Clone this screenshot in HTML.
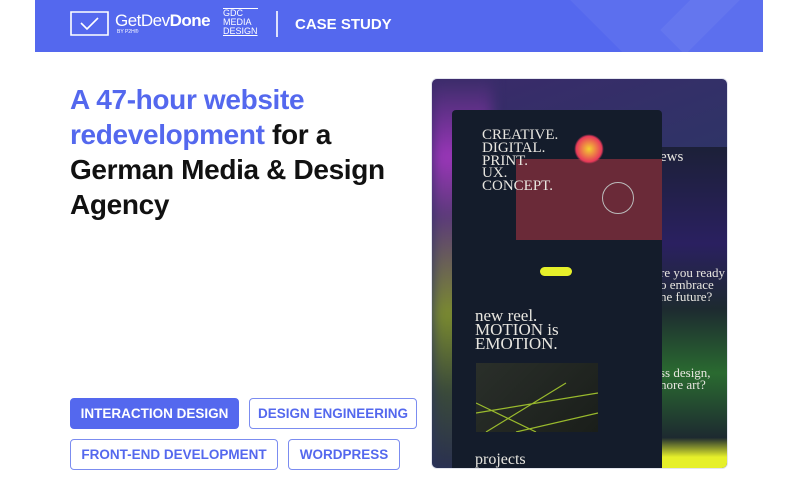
<!DOCTYPE html>
<html><head><meta charset="utf-8"><style>
*{margin:0;padding:0;box-sizing:border-box}
body{width:800px;height:480px;background:#fff;font-family:"Liberation Sans",sans-serif;position:relative;overflow:hidden}
.hdr{position:absolute;left:35px;top:0;width:728px;height:52px;background:#5468ee;overflow:hidden}
.hdr .sh{position:absolute;background:rgba(255,255,255,.05);transform:rotate(45deg)}
h1{position:absolute;left:70px;top:82px;font-size:28px;line-height:35px;font-weight:700;color:#111;letter-spacing:-.35px;width:360px}
h1 span{color:#5468ee}
.tag{position:absolute;height:31px;border:1.5px solid #7b8cf0;border-radius:4px;color:#5468ee;font-weight:700;font-size:13.5px;display:flex;align-items:center;justify-content:center}
.tag.on{background:#5468ee;color:#fff;border-color:#5468ee}
.card{position:absolute;left:431px;top:78px;width:297px;height:391px;border-radius:6px;overflow:hidden;border:1px solid #e3e5ee;background:linear-gradient(160deg,#3a2a6a 0%,#2d3566 40%,#27305a 100%)}
.serif{font-family:"Liberation Serif",serif;color:#e8e6e0}
</style></head><body>
<div class="hdr">
<div class="sh" style="left:560px;top:-60px;width:120px;height:120px"></div>
<div class="sh" style="left:650px;top:-30px;width:120px;height:120px"></div>
<svg style="position:absolute;left:35px;top:11px" width="40" height="26"><path d="M1 1h37v23H1z M11 12l6 6 11-11" fill="none" stroke="#fff" stroke-width="1.6"/></svg>
<div style="position:absolute;left:80px;top:11px;color:#fff;font-size:17px;letter-spacing:-.5px">GetDev<b>Done</b></div>
<div style="position:absolute;left:82px;top:29px;color:#fff;font-size:5px">BY P2H®</div>
<div style="position:absolute;left:188px;top:8px;color:#fff;font-size:9px;line-height:9px;border-top:1px solid #fff">GDC<br>MEDIA<br><u>DESIGN</u></div>
<div style="position:absolute;left:241px;top:11px;width:2px;height:26px;background:#fff;opacity:.8"></div>
<div style="position:absolute;left:260px;top:16px;color:#fff;font-size:15px;font-weight:700">CASE STUDY</div>
</div>
<h1><span>A 47-hour website redevelopment</span> for a German Media &amp; Design Agency</h1>
<div class="tag on" style="left:70px;top:398px;width:169px">INTERACTION DESIGN</div>
<div class="tag" style="left:249px;top:398px;width:168px">DESIGN ENGINEERING</div>
<div class="tag" style="left:70px;top:439px;width:208px">FRONT-END DEVELOPMENT</div>
<div class="tag" style="left:288px;top:439px;width:112px">WORDPRESS</div>
<div class="card">
<div style="position:absolute;left:0;top:0;width:60px;height:391px;background:linear-gradient(180deg,#3b2d6a 0%,#9a36b8 20%,#5b3a7a 35%,#7a8a30 60%,#3a4a3a 80%,#2a3050 100%);filter:blur(6px)"></div>
<div style="position:absolute;left:228px;top:68px;width:70px;height:323px;background:linear-gradient(180deg,#1c2038 0%,#2a2060 30%,#1d2a30 50%,#2a6a30 70%,#1d2a30 90%,#e6f02a 96%)"></div>
<div style="position:absolute;left:228px;top:70px;font-size:15px" class="serif">ews</div>
<div style="position:absolute;left:228px;top:188px;font-size:13px;line-height:12px" class="serif">re you ready<br>o embrace<br>ne future?</div>
<div style="position:absolute;left:228px;top:288px;font-size:13px;line-height:12px" class="serif">ss design,<br>nore art?</div>
<div style="position:absolute;left:20px;top:31px;width:210px;height:360px;background:#141c2b;border-radius:4px 4px 0 0"></div>
<div style="position:absolute;left:84px;top:80px;width:146px;height:81px;background:#6a2a38"></div>
<div style="position:absolute;left:142px;top:55px;width:30px;height:30px;border-radius:50%;background:radial-gradient(circle,#f4d030,#e83a5a 60%,transparent 70%)"></div>
<div style="position:absolute;left:170px;top:103px;width:32px;height:32px;border-radius:50%;border:1px solid #bbb"></div>
<div style="position:absolute;left:50px;top:50px;font-size:15px;line-height:12.8px" class="serif">CREATIVE.<br>DIGITAL.<br>PRINT.<br>UX.<br>CONCEPT.</div>
<div style="position:absolute;left:108px;top:188px;width:32px;height:9px;border-radius:5px;background:#e6f02a"></div>
<div style="position:absolute;left:43px;top:230px;font-size:17px;line-height:14px" class="serif">new reel.<br>MOTION is<br>EMOTION.</div>
<div style="position:absolute;left:44px;top:284px;width:122px;height:69px;background:linear-gradient(135deg,#2a2f2a,#1a1e1a);overflow:hidden"><svg width="122" height="69"><path d="M0 50L122 30M10 69L90 20M40 69L122 50M0 40L60 69" stroke="#b8e030" stroke-width="1.2" opacity=".8"/></svg></div>
<div style="position:absolute;left:43px;top:372px;font-size:16px" class="serif">projects</div>
</div>
</body></html>
